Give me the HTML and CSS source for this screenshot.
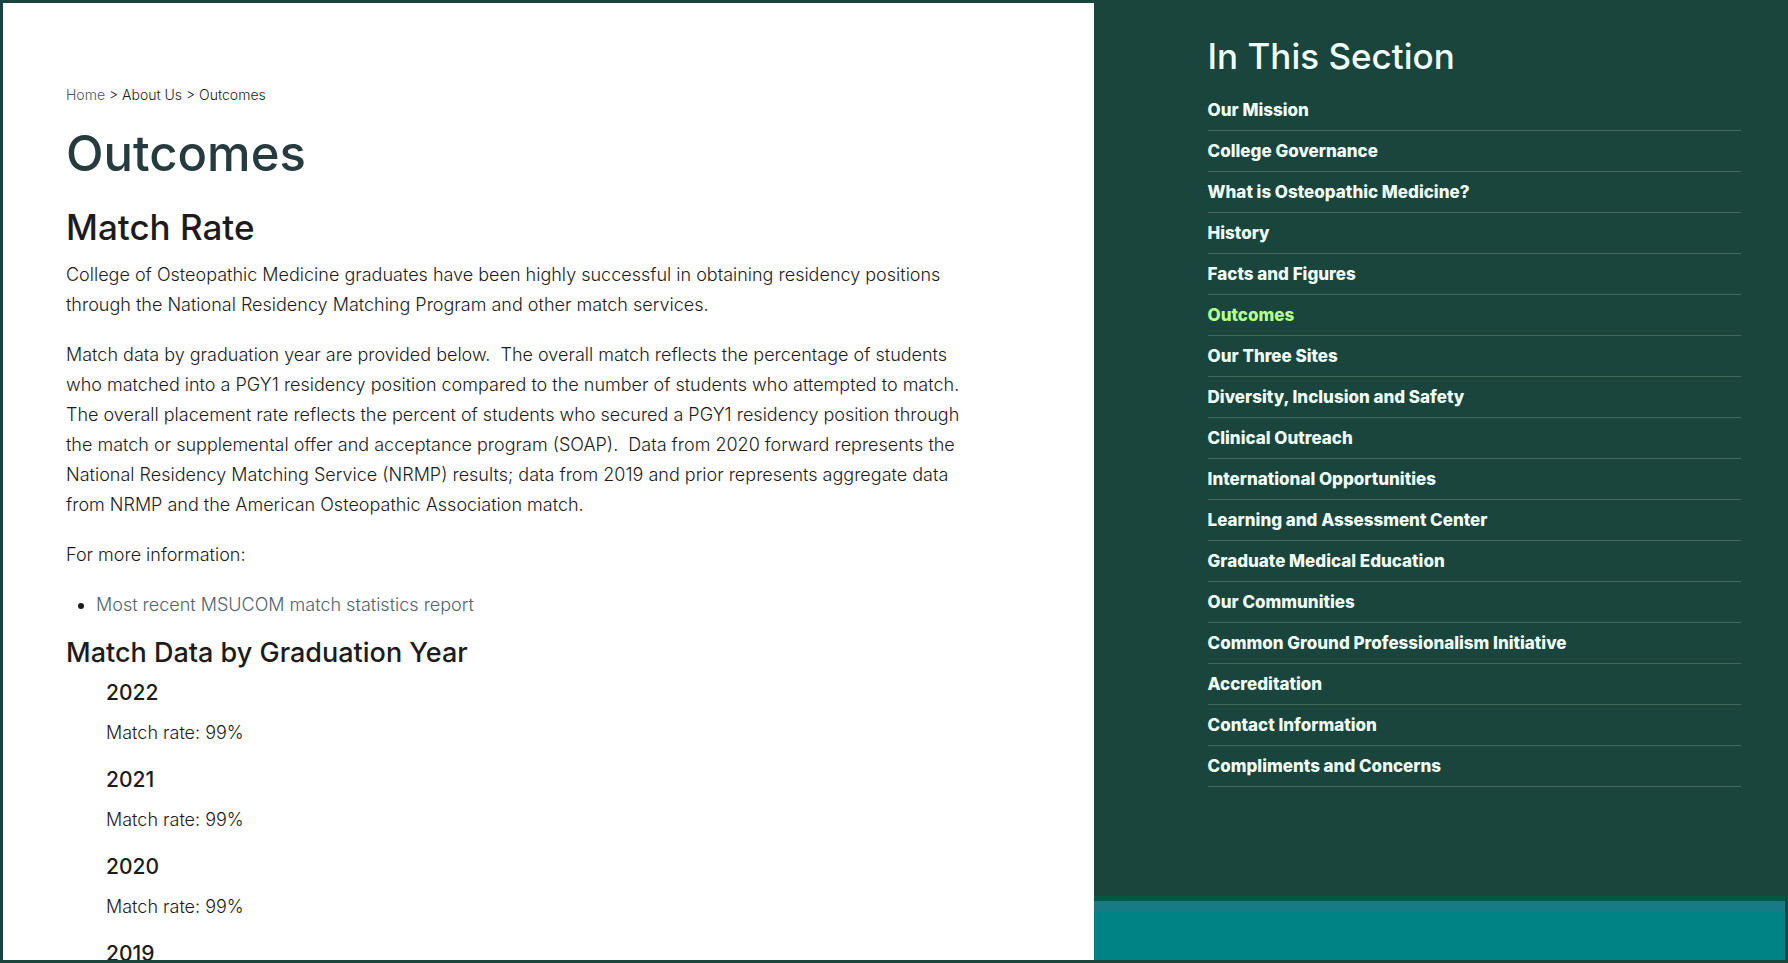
FILE: index.html
```html
<!DOCTYPE html>
<html lang="en">
<head>
  <meta charset="UTF-8">
  <meta name="viewport" content="width=device-width, initial-scale=1.0">
  <title>Outcomes</title>
  <link rel="stylesheet" href="styles.css">
</head>
<body>
  <div class="page">
    <main class="content">
      <nav class="breadcrumb" aria-label="Breadcrumb">
        <a class="home" href="#">Home</a> &gt; <a href="#">About Us</a> &gt; <span>Outcomes</span>
      </nav>
      <h1>Outcomes</h1>
      <h2>Match Rate</h2>
      <p>College of Osteopathic Medicine graduates have been highly successful in obtaining residency positions<br> through the National Residency Matching Program and other match services.</p>
      <p>Match data by graduation year are provided below.&nbsp; The overall match reflects the percentage of students<br> who matched into a PGY1 residency position compared to the number of students who attempted to match.<br> The overall placement rate reflects the percent of students who secured a PGY1 residency position through<br> the match or supplemental offer and acceptance program (SOAP).&nbsp; Data from 2020 forward represents the<br> National Residency Matching Service (NRMP) results; data from 2019 and prior represents aggregate data<br> from NRMP and the American Osteopathic Association match.</p>
      <p>For more information:</p>
      <ul class="links">
        <li><a href="#">Most recent MSUCOM match statistics report</a></li>
      </ul>
      <h3>Match Data by Graduation Year</h3>
      <div class="years">
        <h4>2022</h4>
        <p>Match rate: 99%</p>
        <h4>2021</h4>
        <p>Match rate: 99%</p>
        <h4>2020</h4>
        <p>Match rate: 99%</p>
        <h4>2019</h4>
      </div>
    </main>
    <aside class="sidebar">
      <nav class="section-nav" aria-labelledby="section-title">
        <h2 id="section-title">In This Section</h2>
        <ul>
          <li><a href="#">Our Mission</a></li>
          <li><a href="#">College Governance</a></li>
          <li><a href="#">What is Osteopathic Medicine?</a></li>
          <li><a href="#">History</a></li>
          <li><a href="#">Facts and Figures</a></li>
          <li><a class="active" href="#">Outcomes</a></li>
          <li><a href="#">Our Three Sites</a></li>
          <li><a href="#">Diversity, Inclusion and Safety</a></li>
          <li><a href="#">Clinical Outreach</a></li>
          <li><a href="#">International Opportunities</a></li>
          <li><a href="#">Learning and Assessment Center</a></li>
          <li><a href="#">Graduate Medical Education</a></li>
          <li><a href="#">Our Communities</a></li>
          <li><a href="#">Common Ground Professionalism Initiative</a></li>
          <li><a href="#">Accreditation</a></li>
          <li><a href="#">Contact Information</a></li>
          <li><a href="#">Compliments and Concerns</a></li>
        </ul>
      </nav>
      <div class="band"></div>
    </aside>
  </div>
</body>
</html>
```
FILE: styles.css
```css
* {
  box-sizing: border-box;
}
body {
  margin: 0;
  font-family: Inter, "Open Sans", sans-serif;
  font-size: 18px;
  font-weight: 300;
  line-height: 30px;
  color: #1c1c1c;
}
a {
  color: inherit;
  text-decoration: none;
}
a:hover {
  text-decoration: underline;
}
h1, h2, h3, h4, p, ul {
  margin: 0;
}
h1, h2, h3, h4 {
  font-weight: 500;
}
.page {
  display: flex;
  height: 100vh;
  border: 3px solid #1a453c;
  background-color: #1a453c;
  overflow: hidden;
}
.content {
  width: 61.2%;
  padding: 82px 63px 0;
  background-color: #fff;
  overflow: hidden;
  white-space: nowrap;
}
.breadcrumb {
  margin-bottom: 21px;
  font-size: 14px;
  line-height: 20px;
}
.breadcrumb .home {
  color: #4a5560;
}
h1 {
  margin-bottom: 25px;
  font-size: 49px;
  line-height: 56px;
  color: #263c3c;
}
h2 {
  margin-bottom: 13px;
  font-size: 35px;
  line-height: 40px;
}
.content p {
  margin-bottom: 20px;
}
.links {
  margin-bottom: 17px;
  padding-left: 30px;
}
.links a {
  color: #4f6470;
}
h3 {
  margin-bottom: 12px;
  font-size: 27px;
  line-height: 32px;
}
.years {
  padding-left: 40px;
}
h4 {
  margin-bottom: 13px;
  font-size: 21px;
  line-height: 24px;
}
.sidebar {
  flex: 1;
  display: flex;
  flex-direction: column;
  color: #f0fffa;
}
.section-nav {
  flex: 1;
  padding: 33px 44px 0 114px;
}
.section-nav h2 {
  margin-bottom: 14px;
}
.section-nav ul {
  padding: 0;
  list-style: none;
}
.section-nav li {
  padding: 8px 0;
  border-bottom: 1px solid #43695f;
  font-size: 17px;
  font-weight: 800;
  line-height: 24px;
}
.section-nav .active {
  color: #b5ff8f;
}
.band {
  height: 64px;
  border-top: 5px solid #005a40;
  background: linear-gradient(#177a85 11px, #008384 11px);
}
```
